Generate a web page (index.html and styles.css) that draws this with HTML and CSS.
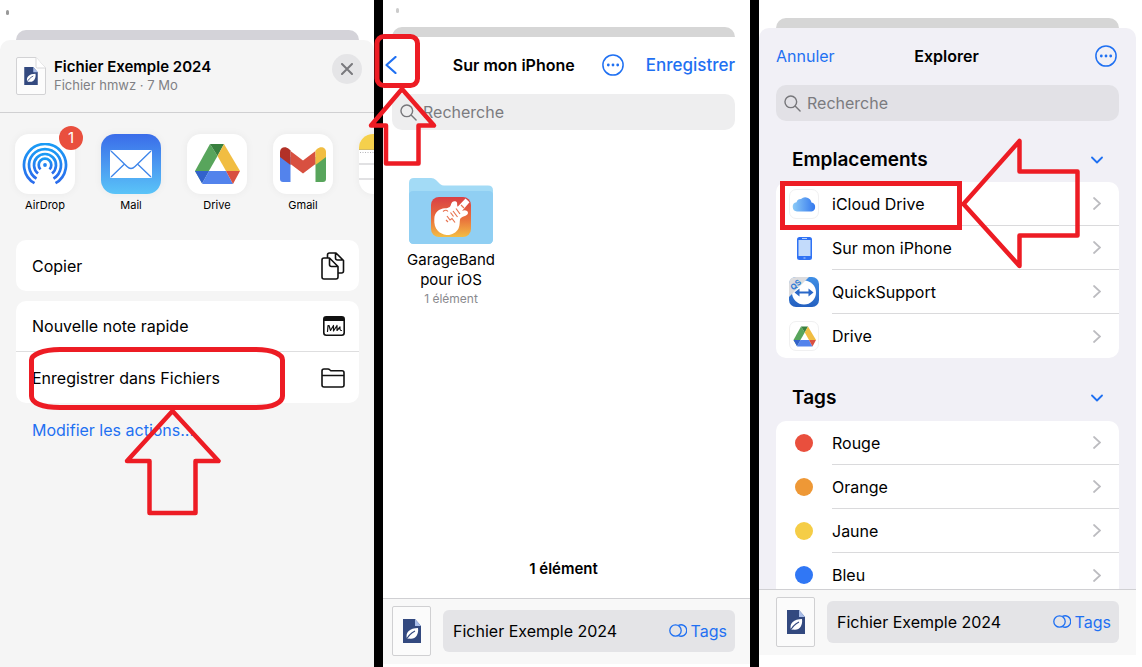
FILE: index.html
```html
<!DOCTYPE html>
<html lang="fr">
<head>
<meta charset="utf-8">
<meta name="viewport" content="width=device-width, initial-scale=1">
<title>Enregistrer dans iCloud Drive</title>
<link rel="stylesheet" href="styles.css">
</head>
<body>
<svg class="defs" aria-hidden="true">
  <defs>
    <linearGradient id="g-air" x1="0" y1="0" x2="0" y2="1"><stop offset="0" stop-color="#1a9bf5"/><stop offset="1" stop-color="#2b6cec"/></linearGradient>
    <linearGradient id="g-cloud" x1="0" y1="0" x2="1" y2="0"><stop offset="0" stop-color="#8ccbf7"/><stop offset="1" stop-color="#3478ee"/></linearGradient>
    <linearGradient id="g-band" x1="0" y1="0" x2="0" y2="1"><stop offset="0" stop-color="#d93f45"/><stop offset=".55" stop-color="#e9713c"/><stop offset="1" stop-color="#f3bd45"/></linearGradient>
    <linearGradient id="g-qs" x1="0" y1="0" x2="0" y2="1"><stop offset="0" stop-color="#3f8fe6"/><stop offset="1" stop-color="#2460c0"/></linearGradient>
    <symbol id="i-doc" viewBox="0 0 18 24">
      <path d="M0 0h12l6 7v17H0z" fill="#33497f"/>
      <path d="M12 0l6 7h-6z" fill="#a9bde8"/>
      <path d="M4 20C2 13 7 9 15 9c1 7-3 12-9 10.500z" fill="#fff"/>
      <path d="M3 21.500C5 17 8 14 12 12" fill="none" stroke="#33497f" stroke-width="1.100"/>
    </symbol>
    <symbol id="i-drive" viewBox="0 0 46 42">
      <path d="M16 1 1 28l7 12 15.500-27z" fill="#58a55c"/>
      <path d="M16 1h14l-6.500 12z" fill="#39803f"/>
      <path d="M30 1 23.500 13 32 28h14z" fill="#f1bd42"/>
      <path d="M1 28h14L8 40.500z" fill="#3262cc"/>
      <path d="M15 28h17l7 13H9l-1-.500z" fill="#5383ec"/>
      <path d="M32 28h14l-7 13z" fill="#d85040"/>
    </symbol>
    <symbol id="i-search" viewBox="0 0 18 18"><g fill="none" stroke="#77777b" stroke-width="1.500" stroke-linecap="round"><circle cx="7.200" cy="7.200" r="6.200"/><path d="m12 12 5 5"/></g></symbol>
    <symbol id="i-more" viewBox="0 0 22 22"><circle cx="11" cy="11" r="10.100" fill="none" stroke="#1f70f2" stroke-width="1.500"/><g fill="#1f70f2"><circle cx="6.300" cy="11" r="1.400"/><circle cx="11" cy="11" r="1.400"/><circle cx="15.700" cy="11" r="1.400"/></g></symbol>
    <symbol id="i-chev" viewBox="0 0 8 13"><path d="m1 1 6 5.500L1 12" fill="none" stroke="#bcbcc0" stroke-width="1.700" stroke-linecap="round"/></symbol>
    <symbol id="i-down" viewBox="0 0 12 8"><path d="m1 1.500 5 5 5-5" fill="none" stroke="#1f70f2" stroke-width="1.800" stroke-linecap="round" stroke-linejoin="round"/></symbol>
    <symbol id="i-tags" viewBox="0 0 18 13"><g fill="none" stroke="#1f70f2" stroke-width="1.300"><circle cx="6.500" cy="6.500" r="5.700"/><path d="M9.500 1.400A5.700 5.700 0 1 1 9.500 11.600"/></g></symbol>
  </defs>
</svg>

<main class="screens">
  <section class="screen share" aria-label="Partager">
    <div class="status status-tall"><span class="dot dot-dark"></span></div>
    <div class="backing backing-mauve"></div>
    <div class="sheet sheet-grey">
      <header class="file-head">
        <span class="page"><svg class="page-shape" viewBox="0 0 30 38"><path d="M2 .500h18L29.500 11v25a1.500 1.500 0 0 1-1.500 1.500H2A1.500 1.500 0 0 1 .500 36V2A1.500 1.500 0 0 1 2 .500z" fill="#fcfcfc" stroke="#d2d2d4"/><path d="M20 .500V9.500q0 1.500 1.500 1.500h8" fill="#fff" stroke="#d8d8da"/><svg x="8" y="10" width="14" height="18"><use href="#i-doc"/></svg></svg></span>
        <div class="file-text"><h1>Fichier Exemple 2024</h1><p>Fichier hmwz · 7 Mo</p></div>
        <button class="close" aria-label="Fermer"><svg width="12" height="12" viewBox="0 0 12 12"><path d="m1 1 10 10M11 1 1 11" stroke="#79797d" stroke-width="2" stroke-linecap="round"/></svg></button>
      </header>
      <div class="apps">
        <button class="app"><span class="tile"><svg width="46" height="42" viewBox="0 0 46 42"><g fill="none" stroke="url(#g-air)" stroke-width="2.700"><path d="M12.500 40.200A21 21 0 1 1 33.500 40.200"/><path d="M14.500 35.600A16 16 0 1 1 31.500 35.600"/><path d="M16 30.500A11 11 0 1 1 30 30.500"/><path d="M18.500 26.400A6.300 6.300 0 1 1 27.500 26.400"/></g><circle cx="23" cy="22" r="1.900" fill="#2382f0"/></svg><span class="badge">1</span></span>AirDrop</button>
        <button class="app"><span class="tile tile-mail"><svg width="42" height="28" viewBox="0 0 42 28"><rect width="42" height="28" rx="1.500" fill="#fff"/><path d="M1 1l16 15.500q4 4 8 0L41 1M1 27l13.500-13M41 27 27.500 14" fill="none" stroke="#3d85ea" stroke-width="1.300"/></svg></span>Mail</button>
        <button class="app"><span class="tile"><svg width="46" height="42"><use href="#i-drive"/></svg></span>Drive</button>
        <button class="app"><span class="tile"><svg width="46" height="35" viewBox="0 0 46 35"><path d="M0 10h10.500v25H3a3 3 0 0 1-3-3z" fill="#5383ec"/><path d="M35.500 10H46v22a3 3 0 0 1-3 3h-7.500z" fill="#58a55c"/><path d="M10.500 4 23 13.500 35.500 4v13L23 26.500 10.500 17z" fill="#d85040"/><path d="M0 5C0 .500 5-1.500 9 2l1.500 1.500V18L0 10z" fill="#b23127"/><path d="M46 5C46 .500 41-1.500 37 2l-1.500 1.500V18L46 10z" fill="#f1bd42"/></svg></span>Gmail</button>
        <button class="app"><span class="tile tile-notes"><svg width="60" height="60" viewBox="0 0 60 60"><path d="M0 0h60v15.500H0z" fill="#f5d04c"/><path d="M0 15.500h60" stroke="#d2b963"/><path d="M1 18.500h59" stroke="#b5b5b8" stroke-dasharray="1 1.500"/><path d="M0 30h60M0 45h60" stroke="#d8d8da" stroke-width="1.500"/></svg></span>Notes</button>
      </div>
      <div class="actions">
        <div class="card"><button class="action">Copier<svg width="24" height="28" viewBox="0 0 24 28"><g fill="none" stroke="#111" stroke-width="1.600" stroke-linejoin="round"><path d="M6.500 6V3q0-2 2-2H15l7.500 7.500V19q0 2-2 2H17M14.500 1v5q0 2 2 2h6"/><path d="M3 6h5.500L17 14.500V25q0 2-2 2H3q-2 0-2-2V8q0-2 2-2zM8.500 6v6.500q0 2 2 2H17"/></g></svg></button></div>
        <div class="card">
          <button class="action">Nouvelle note rapide<svg width="22" height="20" viewBox="0 0 22 20"><rect x=".800" y=".800" width="20.400" height="18.400" rx="2.500" fill="none" stroke="#111" stroke-width="1.600"/><path d="M1 1h20v4H1z" fill="#111"/><path d="M4.500 15.500 5 9.500l1 0 1.500 5 3-5 0 5.500 3.500-5.500 0 5 3-3.500q-.500 3.500 1.500 3.500" fill="none" stroke="#111" stroke-width="1.200" stroke-linecap="round" stroke-linejoin="round"/></svg></button>
          <button class="action">Enregistrer dans Fichiers<svg width="24" height="20" viewBox="0 0 24 20"><path d="M1 17V3q0-2 2-2h4q1 0 2 1l1 .800h11q2 0 2 2V17q0 2-2 2H3q-2 0-2-2zM1 7.500h22" fill="none" stroke="#111" stroke-width="1.600" stroke-linejoin="round"/></svg></button>
          <svg class="mark mark-save" width="256" height="170" viewBox="29 347 256 170" aria-hidden="true"><path d="M60 349.500H256C274 349.500 282.500 355 282.500 360V396C282.500 402 274 407.500 256 407.500H60C42 407.500 31.500 403 31.500 396V360C31.500 355 42 349.500 60 349.500z"/><path d="m172.500 411 46 50H195.500v52H149.500v-52H127z" stroke-width="4.500"/></svg>
        </div>
        <a class="edit" href="#">Modifier les actions...</a>
      </div>
    </div>
  </section>

  <div class="rule" aria-hidden="true"></div>

  <section class="screen phone" aria-label="Sur mon iPhone">
    <div class="status status-mid"><span class="dot"></span></div>
    <div class="backing"></div>
    <header class="nav nav-phone">
      <button class="back" aria-label="Retour"><svg width="12" height="18" viewBox="0 0 12 18"><path d="M10.500 1 1.500 9l9 8" fill="none" stroke="#1f70f2" stroke-width="2.200" stroke-linecap="round" stroke-linejoin="round"/></svg></button>
      <h2>Sur mon iPhone</h2>
      <button class="more" aria-label="Plus"><svg width="22" height="22"><use href="#i-more"/></svg></button>
      <button class="link strong">Enregistrer</button>
    </header>
    <label class="search"><svg width="17" height="17"><use href="#i-search"/></svg><input type="search" placeholder="Recherche" aria-label="Recherche"></label>
    <div class="files">
      <button class="folder">
        <svg width="84" height="66" viewBox="0 0 84 66"><path d="M0 5q0-5 5-5h17q3 0 5 2l4 4q2 1.500 4 1.500h44q5 0 5 5V61q0 5-5 5H5q-5 0-5-5z" fill="#a3dbf6"/><path d="M0 17q0-4 4-4h76q4 0 4 4v44q0 5-5 5H5q-5 0-5-5z" fill="#90cff3"/><rect x="22" y="19" width="40" height="40" rx="8" fill="url(#g-band)"/><path d="M25.300 41C25.500 34 30 31 36 30.300 40 30 41.500 29 42 26.500 42.500 23.500 45 22.500 47 23.500 49 24.500 47.500 27 48.700 28.700L56.500 20.500 60.500 24.300 53 33C55.500 31.500 59 32.500 59 35 58.500 38.500 52 38 51 41.500 50.500 44 51 47 49.500 50.500 47 55 42 57.500 37.500 57 34 56.500 31 55 29 53 26 50 25 46 25.300 41z" fill="#fff"/><path d="M34 33.500q3-2.500 5 0M38 38l3 4 2-1.500 3 4M44 33l4.500 6M47 30.500l4 5.500M41.500 34.500l3 4M52 27l3 3M37 42l2 2" fill="none" stroke="#e77350" stroke-width="1.200"/></svg>
        <span class="folder-name">GarageBand pour iOS</span><span class="folder-count">1 élément</span>
      </button>
    </div>
    <p class="total">1 élément</p>
    <footer class="savebar savebar-phone">
      <span class="thumb"><svg width="18" height="24"><use href="#i-doc"/></svg></span>
      <div class="name-field"><input type="text" value="Fichier Exemple 2024" aria-label="Nom du fichier"><button class="link tags"><svg width="18" height="13"><use href="#i-tags"/></svg>Tags</button></div>
    </footer>
    <svg class="mark mark-back" width="68" height="134" viewBox="369 33 68 134" aria-hidden="true"><rect x="377" y="36.500" width="40.500" height="49" rx="7"/><path d="m402 89 32 36.500H418.500V163.500H386V125.500H371z" stroke-width="4.500"/></svg>
  </section>

  <div class="rule" aria-hidden="true"></div>

  <section class="screen browse" aria-label="Explorer">
    <div class="status status-low"></div>
    <div class="backing"></div>
    <div class="sheet sheet-lilac">
      <header class="nav nav-browse">
        <button class="link">Annuler</button><h2>Explorer</h2>
        <button class="more" aria-label="Plus"><svg width="22" height="22"><use href="#i-more"/></svg></button>
      </header>
      <label class="search search-dark"><svg width="17" height="17"><use href="#i-search"/></svg><input type="search" placeholder="Recherche" aria-label="Recherche"></label>
      <div class="lists">
        <button class="group">Emplacements<svg width="12" height="8"><use href="#i-down"/></svg></button>
        <div class="list">
          <button class="row"><span class="icon boxed"><svg width="24" height="16" viewBox="0 0 24 16"><path d="M5 15.500a4.700 4.700 0 0 1-.500-9.300A4.500 4.500 0 0 1 9 3 6.300 6.300 0 0 1 19.500 6.500a4.600 4.600 0 0 1 0 9z" fill="url(#g-cloud)"/></svg></span><span class="row-text">iCloud Drive<svg width="8" height="13"><use href="#i-chev"/></svg></span></button>
          <button class="row"><span class="icon"><svg width="15" height="23" viewBox="0 0 15 23"><rect width="15" height="23" rx="2.500" fill="#2f72f4"/><path d="M1.500 3h12v16h-12z" fill="#c3dbfb"/><path d="M5 1.500h5M6.500 21h2" stroke="#b8d2fb" stroke-width="1"/></svg></span><span class="row-text">Sur mon iPhone<svg width="8" height="13"><use href="#i-chev"/></svg></span></button>
          <button class="row"><span class="icon"><svg width="30" height="30" viewBox="0 0 30 30"><rect width="30" height="30" rx="7" fill="url(#g-qs)"/><circle cx="15" cy="15.500" r="12" fill="#fff"/><path d="M0 20V7q0-7 7-7h13z" fill="#dcdcde"/><path d="m5.500 15.500 5-4v3h9v-3l5 4-5 4v-3h-9v3z" fill="#2a68c8"/><text x="0" y="4" transform="translate(6 7) rotate(-43)" text-anchor="middle" class="qs">QS</text></svg></span><span class="row-text">QuickSupport<svg width="8" height="13"><use href="#i-chev"/></svg></span></button>
          <button class="row"><span class="icon boxed"><svg width="23" height="21"><use href="#i-drive"/></svg></span><span class="row-text">Drive<svg width="8" height="13"><use href="#i-chev"/></svg></span></button>
          <svg class="mark mark-cloud" width="304" height="136" viewBox="778 135 304 136" aria-hidden="true"><path d="M782.500 183.500H959.500V227.500H782.500z" stroke-linejoin="miter"/><path d="M963.500 204 1019.500 141V171.500H1077.500V235.500H1019.500V266z" stroke-width="4.500"/></svg>
        </div>
        <button class="group">Tags<svg width="12" height="8"><use href="#i-down"/></svg></button>
        <div class="list">
          <button class="row"><span class="icon"><i class="tag red"></i></span><span class="row-text">Rouge<svg width="8" height="13"><use href="#i-chev"/></svg></span></button>
          <button class="row"><span class="icon"><i class="tag orange"></i></span><span class="row-text">Orange<svg width="8" height="13"><use href="#i-chev"/></svg></span></button>
          <button class="row"><span class="icon"><i class="tag yellow"></i></span><span class="row-text">Jaune<svg width="8" height="13"><use href="#i-chev"/></svg></span></button>
          <button class="row"><span class="icon"><i class="tag blue"></i></span><span class="row-text">Bleu<svg width="8" height="13"><use href="#i-chev"/></svg></span></button>
        </div>
      </div>
    </div>
    <footer class="savebar savebar-browse">
      <span class="thumb"><svg width="18" height="24"><use href="#i-doc"/></svg></span>
      <div class="name-field"><input type="text" value="Fichier Exemple 2024" aria-label="Nom du fichier"><button class="link tags"><svg width="18" height="13"><use href="#i-tags"/></svg>Tags</button></div>
    </footer>
  </section>
</main>
</body>
</html>
```
FILE: styles.css
```css
* { box-sizing: border-box; }
body { margin: 0; background: #fff; color: #000; font-family: Inter, "Liberation Sans", sans-serif; font-size: 16px; line-height: 20px; }
h1, h2, p { margin: 0; }
button, input { margin: 0; padding: 0; border: 0; background: none; color: inherit; font: inherit; min-width: 0; }
button { cursor: pointer; }
svg { display: block; flex: none; }
.defs { position: absolute; width: 0; height: 0; }

.screens { display: grid; grid-template-columns: 374fr 9px 367fr 9px 377fr; height: 100vh; padding-right: 6px; overflow: hidden; }
.rule { background: #000; }
.screen { position: relative; display: flex; flex-direction: column; min-width: 0; min-height: 0; }
.phone { z-index: 1; }

.status { flex: none; padding: 10px 6px 0; }
.status-tall { height: 30px; }
.status-mid { height: 27px; padding: 8px 13px 0; }
.status-low { height: 18px; }
.dot { display: block; width: 3px; height: 5px; border-radius: 2px; background: #ccc; }
.dot-dark { background: #999; }
.backing { flex: none; height: 10px; margin: 0 15px 0 16px; border-radius: 10px 10px 0 0; background: #d6d6d6; }
.backing-mauve { background: #d4d3d9; }
.phone .backing { margin-left: 9px; }
.browse .backing { margin: 0 17px; }
.sheet { flex: 1; min-height: 0; display: flex; flex-direction: column; border-radius: 10px 10px 0 0; overflow: hidden; }
.sheet-grey { background: #f5f5f5; }
.sheet-lilac { background: #f1f0f6; }

.file-head { display: flex; align-items: flex-start; gap: 8px; height: 73px; padding: 14px 12px 0 16px; border-bottom: 1px solid #d0d0d2; }
.page { width: 30px; padding-top: 3px; }
.page-shape { width: 30px; height: 38px; }
.file-text { flex: 1; padding-top: 3px; }
.file-text h1 { font-size: 15px; line-height: 20px; font-weight: 600; }
.file-text p { font-size: 13px; line-height: 17px; color: #808084; }
.close { display: grid; place-items: center; width: 30px; height: 30px; border-radius: 50%; background: #e5e5e7; }

.apps { display: flex; gap: 26px; flex: none; padding: 21px 0 16px 15px; overflow: hidden; }
.app { flex: none; width: 60px; display: flex; flex-direction: column; align-items: center; gap: 4px; font-size: 11px; line-height: 15px; }
.tile { position: relative; display: grid; place-items: center; width: 60px; height: 60px; border-radius: 14px; background: #fff; box-shadow: 0 0 8px #0000000d; }
.tile-mail { background: linear-gradient(#3a6ce9, #5ac4f8); }
.tile-notes { overflow: hidden; }
.badge { position: absolute; top: -8px; right: -8px; width: 24px; height: 24px; border-radius: 50%; background: #e94f3e; color: #fff; font-size: 15px; line-height: 24px; text-align: center; }

.actions { display: flex; flex-direction: column; gap: 10px; padding: 11px 15px 0 16px; }
.card { position: relative; border-radius: 10px; background: #fff; }
.action { display: flex; align-items: center; justify-content: space-between; width: 100%; height: 51px; padding: 0 14px 0 16px; text-align: left; }
.action:has(+ .action) { border-bottom: 1px solid #dededf; }
.edit { align-self: flex-start; padding: 7px 16px; color: #1f70f2; text-decoration: none; }

.mark { position: absolute; z-index: 2; pointer-events: none; overflow: visible; fill: none; stroke: #ed1c24; stroke-width: 5; stroke-linejoin: round; }
.mark-save { left: 13px; top: 46px; }
.mark-back { left: -14px; top: 33px; }
.mark-cloud { left: 2px; top: -47px; }

.link { color: #1f70f2; }
.strong { font-size: 17px; font-weight: 500; }
.nav { display: flex; align-items: center; flex: none; height: 57px; padding-bottom: 2px; }
.nav h2 { font-size: 16px; line-height: 20px; font-weight: 600; }
.nav-phone { padding-left: 2px; padding-right: 15px; }
.nav-phone h2 { flex: 1; text-align: right; }
.nav-phone .more { margin: 0 22px 0 27px; }
.nav-browse { display: grid; grid-template-columns: 1fr auto 1fr; padding-left: 17px; padding-right: 19px; }
.nav-browse .link { justify-self: start; }
.nav-browse .more { justify-self: end; }
.search { flex: none; display: flex; align-items: center; gap: 6px; height: 36px; margin: 0 15px 0 9px; padding: 0 8px; border-radius: 10px; background: #eeeeef; }
.search input { flex: 1; appearance: none; outline-offset: 4px; }
.search input::placeholder { color: #7b7b7f; opacity: 1; }
.search-dark { margin: 0 17px; background: #e2e1e6; }

.files { flex: 1; padding: 48px 20px 0; }
.folder { width: 96px; display: flex; flex-direction: column; align-items: center; }
.folder-name { margin-top: 6px; font-size: 15px; line-height: 20px; }
.folder-count { font-size: 12px; line-height: 18px; color: #8a8a8e; }
.total { padding-bottom: 19px; padding-right: 6px; text-align: center; font-size: 15px; font-weight: 600; }

.savebar { flex: none; display: flex; align-items: center; gap: 12px; height: 66px; padding-bottom: 2px; border-top: 1px solid #d0d0d3; background: #f8f8f8; }
.savebar-phone { margin-bottom: 3px; padding-left: 9px; padding-right: 15px; }
.savebar-browse { margin-bottom: 12px; padding-left: 17px; padding-right: 17px; }
.thumb { flex: none; display: grid; place-items: center; width: 39px; height: 50px; border: 1px solid #d0d0d2; border-radius: 2px; background: #fbfbfb; }
.name-field { flex: 1; min-width: 0; display: flex; align-items: center; height: 42px; padding: 0 8px 0 10px; border-radius: 6px; background: #e4e4e7; }
.name-field input { flex: 1; }
.tags { display: flex; align-items: center; gap: 4px; }

.lists { flex: 1; min-height: 0; overflow: hidden; padding: 16px 17px 0; }
.group { width: 100%; display: flex; align-items: center; justify-content: space-between; height: 45px; padding: 0 16px; font-size: 19px; font-weight: 600; }
.list { position: relative; border-radius: 10px; background: #fff; }
.list + .group { height: 46px; margin-top: 17px; }
.row { width: 100%; height: 44px; display: flex; align-items: center; gap: 13px; padding-left: 13px; text-align: left; }
.icon { flex: none; display: grid; place-items: center; width: 30px; height: 30px; }
.boxed { border: 1px solid #f0f0f1; border-radius: 7px; }
.row-text { flex: 1; align-self: stretch; display: flex; align-items: center; justify-content: space-between; padding-right: 18px; }
.row:has(+ .row) .row-text { border-bottom: 1px solid #dadadc; }
.tag { width: 18px; height: 18px; border-radius: 50%; }
.red { background: #e94f3d; }
.orange { background: #ee9836; }
.yellow { background: #f5cd46; }
.blue { background: #3077f5; }
.qs { font: 700 8px Inter, sans-serif; fill: #2f7bd6; }
```
